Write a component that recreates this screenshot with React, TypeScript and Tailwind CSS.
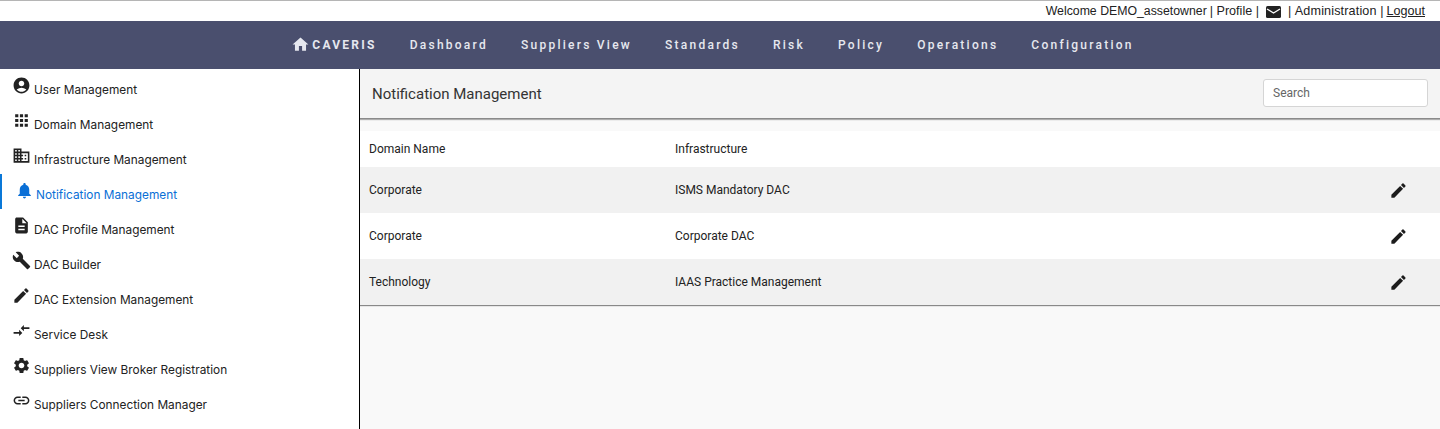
import React from "react";
import {
  MdAccountCircle,
  MdApps,
  MdDomain,
  MdNotifications,
  MdDescription,
  MdBuild,
  MdEdit,
  MdCompareArrows,
  MdSettings,
  MdLink,
  MdHome,
} from "react-icons/md";

const sideItems = [
  { label: "User Management", icon: MdAccountCircle },
  { label: "Domain Management", icon: MdApps },
  { label: "Infrastructure Management", icon: MdDomain },
  { label: "Notification Management", icon: MdNotifications, active: true },
  { label: "DAC Profile Management", icon: MdDescription },
  { label: "DAC Builder", icon: MdBuild },
  { label: "DAC Extension Management", icon: MdEdit },
  { label: "Service Desk", icon: MdCompareArrows },
  { label: "Suppliers View Broker Registration", icon: MdSettings },
  { label: "Suppliers Connection Manager", icon: MdLink },
];

const navItems = ["Dashboard", "Suppliers View", "Standards", "Risk", "Policy", "Operations", "Configuration"];

const rows = [
  { domain: "Corporate", infra: "ISMS Mandatory DAC" },
  { domain: "Corporate", infra: "Corporate DAC" },
  { domain: "Technology", infra: "IAAS Practice Management" },
];

export default function App() {
  return (
    <div className="flex h-[429px] flex-col overflow-hidden bg-white font-['Roboto',sans-serif] text-[#212529]">
      {/* top bar */}
      <div className="flex h-[21px] items-center justify-end gap-[3px] border-t border-[#b5b5b5] pr-[15px] font-['Liberation_Sans',sans-serif] text-[12.6px] text-[#222]">
        <span className="text-[12.3px]">Welcome DEMO_assetowner</span>
        <span>| Profile |</span>
        <svg width="15" height="12" viewBox="0 0 15 12" className="mt-[2px] mr-[4px] ml-[4px]">
          <rect width="15" height="12" rx="1.5" fill="#222" />
          <path d="M1 3 L7.5 7 L14 3" stroke="#fff" strokeWidth="1.3" fill="none" />
        </svg>
        <span>
          | <span className="tracking-[0.15px]">Administration</span> |
        </span>
        <span className="underline">Logout</span>
      </div>

      {/* nav */}
      <div className="flex h-[48px] items-center justify-center gap-[33px] bg-[#4a4f6e] pr-[15px] text-[12px] font-medium tracking-[2.25px] text-[#e6e8ef]">
        <div className="flex items-center gap-[2px] font-bold">
          <MdHome size={19} className="mb-[1px]" />
          <span>CAVERIS</span>
        </div>
        {navItems.map((item) => (
          <span key={item}>{item}</span>
        ))}
      </div>

      <div className="flex flex-1 overflow-hidden">
        {/* sidebar */}
        <div className="w-[360px] shrink-0 border-r border-black font-['Inter',sans-serif] text-[11.85px] text-[#222]">
          {sideItems.map(({ label, icon: Icon, active }) => (
            <div
              key={label}
              className={
                active
                  ? "flex h-[35px] items-start border-l-2 border-[#0a78d8] pl-[12.5px] text-[#0a6fd6]"
                  : "flex h-[35px] items-start pl-[11.5px]"
              }
            >
              <Icon size={19} className="mt-[6.5px] shrink-0" />
              <span className={active ? "mt-[14px] ml-[2.5px] leading-[15px]" : "mt-[14px] ml-[3.5px] leading-[15px]"}>
                {label}
              </span>
            </div>
          ))}
        </div>

        {/* main */}
        <div className="flex-1 bg-[#f9f9f9]">
          <div className="flex h-[50px] items-center justify-between border-b border-[#8a8a8a] bg-[#f4f4f4] px-[12px] shadow-[0_1px_1px_rgba(0,0,0,0.3)]">
            <span className="mt-[1px] text-[15px] text-[#333]">Notification Management</span>
            <input
              placeholder="Search"
              className="mb-[1px] h-[28px] w-[165px] rounded-[3px] border border-[#d5d5d5] bg-white px-[9px] text-[12px] outline-none placeholder:text-[#666]"
            />
          </div>

          <div className="mt-[12px] bg-white text-[12px] text-[#222] shadow-[0_1px_1px_rgba(0,0,0,0.45)]">
            <div className="flex h-[36px] items-center">
              <span className="w-[315px] pl-[9px]">Domain Name</span>
              <span>Infrastructure</span>
            </div>
            {rows.map((row, i) => (
              <div
                key={i}
                className={
                  i % 2 === 0
                    ? "flex h-[46px] items-center bg-[#f1f1f1]"
                    : "flex h-[46px] items-center bg-white"
                }
              >
                <span className="w-[315px] pl-[9px]">{row.domain}</span>
                <span className="flex-1">{row.infra}</span>
                <MdEdit size={19} className="mt-[1px] mr-[32px] text-[#1c1c1c]" />
              </div>
            ))}
          </div>
        </div>
      </div>
    </div>
  );
}
